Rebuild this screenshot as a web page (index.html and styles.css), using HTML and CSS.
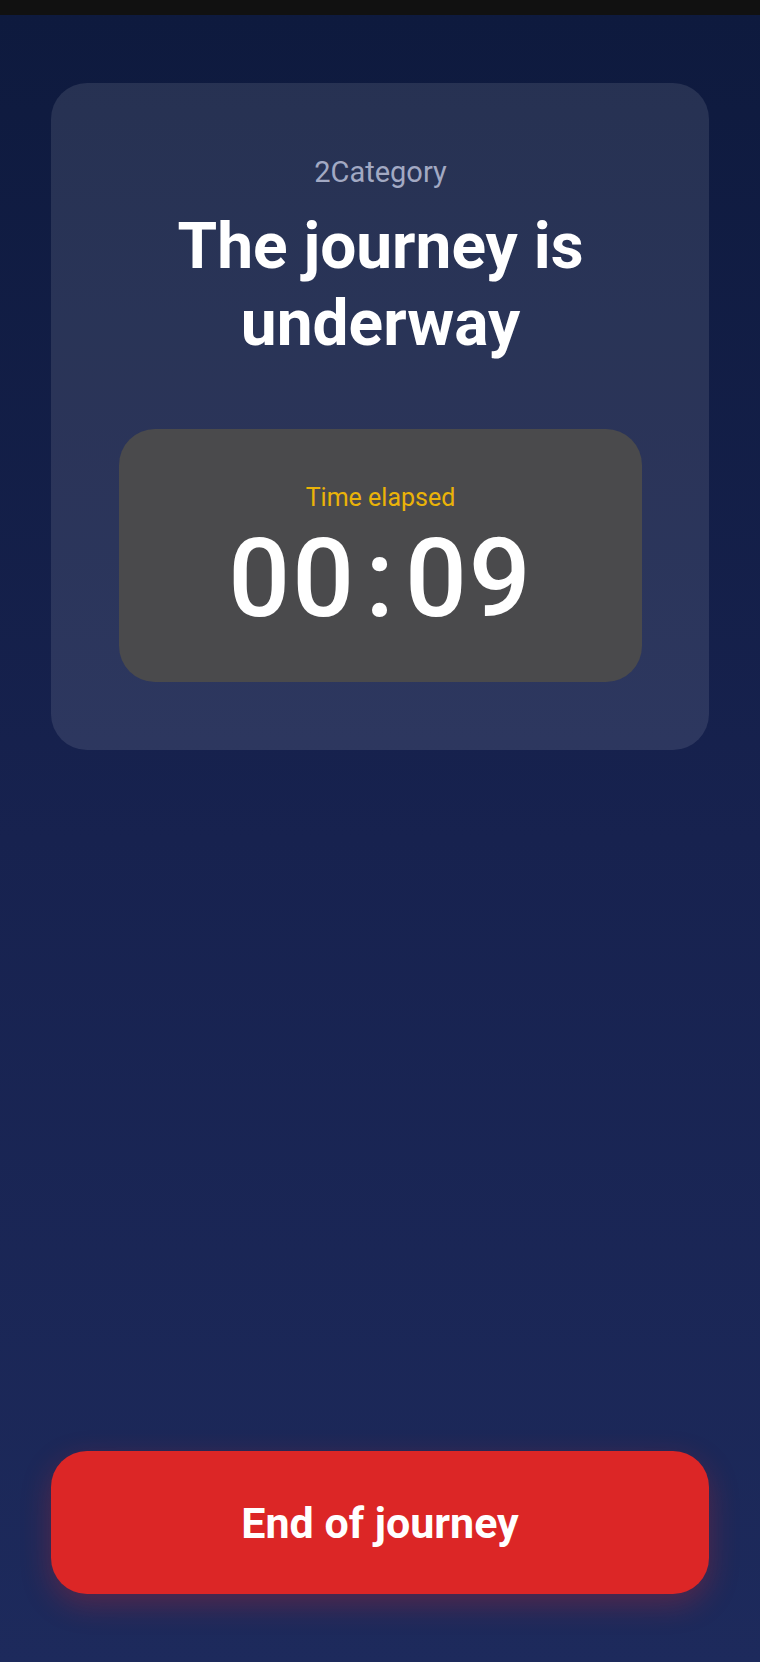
FILE: index.html
```html
<!DOCTYPE html>
<html lang="en">
<head>
<meta charset="utf-8">
<title>Journey</title>
<link rel="stylesheet" href="styles.css">
</head>
<body>
<div class="status-bar"></div>
<main class="screen">
  <section class="card">
    <div class="category">2Category</div>
    <h1 class="title">The journey is<br>underway</h1>
    <div class="timer">
      <div class="timer-label">Time elapsed</div>
      <div class="timer-value"><span>00</span><span class="colon">:</span><span>09</span></div>
    </div>
  </section>
  <button class="end-btn" type="button">End of journey</button>
</main>
</body>
</html>
```
FILE: styles.css
```css
* { box-sizing: border-box; }
html, body { margin: 0; padding: 0; }
body {
  height: 1662px;
  display: flex;
  flex-direction: column;
  font-family: Roboto, "Liberation Sans", sans-serif;
  background: #0f1b3f;
}
.status-bar {
  height: 15px;
  background: #111111;
  flex: none;
}
.screen {
  flex: 1;
  display: flex;
  flex-direction: column;
  padding: 68px 51px 68px;
  background: linear-gradient(180deg, #0e1a3e 0%, #17224f 50%, #1d2a5c 100%);
}
.card {
  background: rgba(255, 255, 255, 0.1);
  border-radius: 36px;
  padding: 75px 67px 68px 68px;
  display: flex;
  flex-direction: column;
  align-items: stretch;
  text-align: center;
}
.category {
  font-size: 29px;
  line-height: 29px;
  color: #a2a9c3;
}
.title {
  margin: 21px 0 0;
  font-size: 64px;
  line-height: 77px;
  font-weight: 700;
  color: #ffffff;
}
.timer {
  margin-top: 67px;
  background: #4a4a4c;
  border-radius: 36px;
  padding: 56px 20px 48px;
}
.timer-label {
  font-size: 25px;
  line-height: 25px;
  color: #eab308;
}
.timer-value {
  margin-top: 14px;
  font-size: 109px;
  line-height: 110px;
  font-weight: 500;
  letter-spacing: 2px;
  color: #ffffff;
  display: flex;
  justify-content: center;
  gap: 9px;
}
.end-btn {
  margin-top: auto;
  height: 143px;
  border: none;
  border-radius: 36px;
  background: #dc2626;
  color: #ffffff;
  font-family: Roboto, "Liberation Sans", sans-serif;
  font-size: 43px;
  font-weight: 700;
  box-shadow: 0 10px 30px rgba(220, 38, 38, 0.3);
}
```
